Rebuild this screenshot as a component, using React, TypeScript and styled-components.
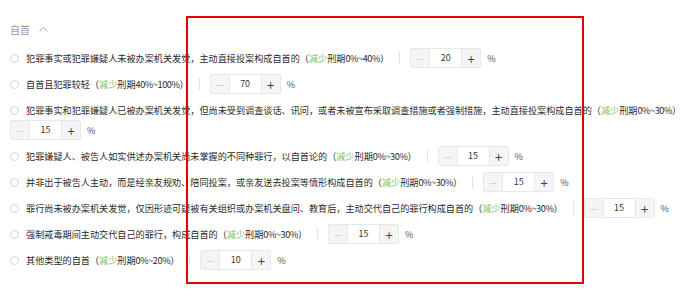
import React from "react";
import styled, { createGlobalStyle } from "styled-components";

interface OptionData {
    text: string;
    range: string;
    value: number;
    newLine?: boolean;
}

const options: OptionData[] = [
    { text: "犯罪事实或犯罪嫌疑人未被办案机关发觉，主动直接投案构成自首的", range: "0%~40%", value: 20 },
    { text: "自首且犯罪较轻", range: "40%~100%", value: 70 },
    {
        text: "犯罪事实和犯罪嫌疑人已被办案机关发觉，但尚未受到调查谈话、讯问，或者未被宣布采取调查措施或者强制措施，主动直接投案构成自首的",
        range: "0%~30%",
        value: 15,
        newLine: true,
    },
    { text: "犯罪嫌疑人、被告人如实供述办案机关尚未掌握的不同种罪行，以自首论的", range: "0%~30%", value: 15 },
    { text: "并非出于被告人主动，而是经亲友规劝、陪同投案，或亲友送去投案等情形构成自首的", range: "0%~30%", value: 15 },
    {
        text: "罪行尚未被办案机关发觉，仅因形迹可疑被有关组织或办案机关盘问、教育后，主动交代自己的罪行构成自首的",
        range: "0%~30%",
        value: 15,
    },
    { text: "强制戒毒期间主动交代自己的罪行，构成自首的", range: "0%~30%", value: 15 },
    { text: "其他类型的自首", range: "0%~20%", value: 10 },
];

const GlobalStyle = createGlobalStyle`
    body {
        margin: 0;
        background: #ffffff;
        font-family: "Noto Sans CJK SC", "Noto Sans", sans-serif;
    }
`

const Page = styled.div`
    position: relative;
    width: 684px;
    height: 297px;
    padding: 19px 10px 0;
    box-sizing: border-box;
    overflow: hidden;
`

const Header = styled.div`
    display: flex;
    align-items: center;
    gap: 9px;
    height: 20px;
    margin-bottom: 9px;
    font-size: 10px;
    color: #999999;
`

const Option = styled.div`
    font-size: 9.15px;
    line-height: 20px;
    color: #2b2b2b;
    margin-bottom: 6px;
`

const Label = styled.span`
    white-space: nowrap;
`

const Radio = styled.span`
    display: inline-block;
    width: 7px;
    height: 7px;
    border: 1px solid #d4d4d4;
    border-radius: 50%;
    vertical-align: top;
    margin: 6px 7px 0 0;
`

const Reduce = styled.span`
    color: #78c257;
`

const Range = styled.span`
    letter-spacing: -0.4px;
`

const Divider = styled.span`
    display: inline-block;
    width: 1px;
    height: 12px;
    background: #e4e4e4;
    vertical-align: top;
    margin: 4px 10px 0 10px;
`

const StepperGroup = styled.span<{ $newLine?: boolean }>`
    display: ${props => props.$newLine ? 'flex' : 'inline-flex'};
    align-items: center;
    gap: 6px;
    vertical-align: top;
    color: #555555;
`

const Stepper = styled.span`
    display: inline-flex;
    height: 20px;
    border: 1px solid #e8e8e8;
    border-radius: 2px;
    box-sizing: border-box;
    overflow: hidden;
`

const StepButton = styled.span<{ $muted?: boolean }>`
    width: 18px;
    display: flex;
    align-items: center;
    justify-content: center;
    background: #f5f5f5;
    color: ${props => props.$muted ? '#c4c4c4' : '#444444'};
    font-size: ${props => props.$muted ? '9px' : '13px'};
    line-height: 1;
`

const StepValue = styled.span`
    width: 31px;
    display: flex;
    align-items: center;
    justify-content: center;
    background: #ffffff;
    border-left: 1px solid #e8e8e8;
    border-right: 1px solid #e8e8e8;
    color: #333333;
    font-size: 9px;
`

const Highlight = styled.div`
    position: absolute;
    left: 186px;
    top: 16px;
    width: 398px;
    height: 268px;
    border: 2px solid #e60000;
    box-sizing: border-box;
    pointer-events: none;
`

const ChevronUp = () => (
    <svg width="9" height="5" viewBox="0 0 9 5">
        <polyline points="0.5,4.5 4.5,0.7 8.5,4.5" fill="none" stroke="#aaaaaa" strokeWidth="1" />
    </svg>
);

const App: React.FC = () => {
    return (
        <Page>
            <GlobalStyle />
            <Header>
                <span>自首</span>
                <ChevronUp />
            </Header>
            {options.map((opt, i) => (
                <Option key={i}>
                    <Label>
                        <Radio />
                        {opt.text}（<Reduce>减少</Reduce>刑期<Range>{opt.range}</Range>）
                    </Label>
                    {!opt.newLine && <Divider />}
                    <StepperGroup $newLine={opt.newLine}>
                        <Stepper>
                            <StepButton $muted>—</StepButton>
                            <StepValue>{opt.value}</StepValue>
                            <StepButton>+</StepButton>
                        </Stepper>
                        %
                    </StepperGroup>
                </Option>
            ))}
            <Highlight />
        </Page>
    );
};

export default App;
